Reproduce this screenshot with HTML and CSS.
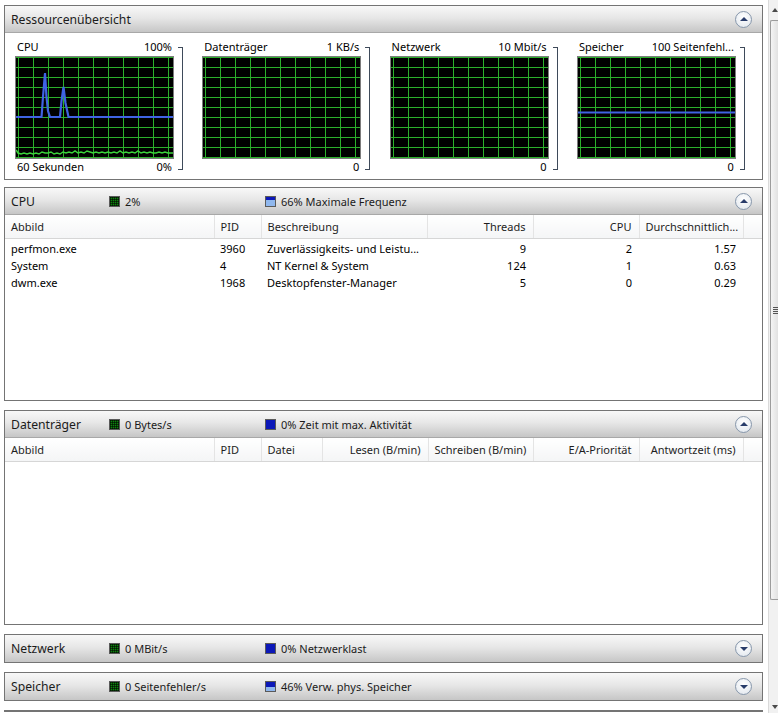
FILE: index.html
```html
<!DOCTYPE html>
<html lang="de">
<head>
  <meta charset="utf-8">
  <title>Ressourcenmonitor</title>
  <link rel="stylesheet" href="styles.css">
</head>
<body>
<div class="window">
<div class="content">

<!-- Übersicht mit den vier Verlaufsgrafiken -->
<section class="panel overview">
  <div class="panel-head">
    <span class="panel-title">Ressourcenübersicht</span>
    <span class="toggle"></span>
  </div>
  <div class="graphs">
    <div class="graph-col">
      <div class="graph-box">
        <div class="graph-label"><span>CPU</span><span>100%</span></div>
        <div class="graph">
          <svg viewBox="0 0 157 101">
            <polyline class="line-green" points="0,93 2,96 5,97 8,96 11,97 14,96 17,97 20,96 23,97 26,95 29,96 32,96 35,95 38,97 41,96 44,97 47,95 50,96 53,95 56,96 59,94 62,96 65,95 68,96 71,94 74,95 77,96 80,95 83,96 86,95 89,96 92,95 95,96 98,95 101,96 104,94 107,96 110,95 113,96 116,95 119,96 122,94 125,96 128,95 131,96 134,95 137,96 140,96 143,95 146,96 149,95 152,96 155,96 157,96"/>
            <polyline class="line-blue" points="0,60 25.5,60 27,40 29,16 30.5,40 32,54 34,60 44,60 45.5,44 47.5,30 49.5,46 52.5,60 157,60"/>
          </svg>
        </div>
        <div class="graph-label"><span>60 Sekunden</span><span>0%</span></div>
      </div>
      <span class="bracket"></span>
    </div>
    <div class="graph-col">
      <div class="graph-box">
        <div class="graph-label"><span>Datenträger</span><span>1 KB/s</span></div>
        <div class="graph"></div>
        <div class="graph-label"><span></span><span>0</span></div>
      </div>
      <span class="bracket"></span>
    </div>
    <div class="graph-col">
      <div class="graph-box">
        <div class="graph-label"><span>Netzwerk</span><span>10 Mbit/s</span></div>
        <div class="graph"></div>
        <div class="graph-label"><span></span><span>0</span></div>
      </div>
      <span class="bracket"></span>
    </div>
    <div class="graph-col">
      <div class="graph-box">
        <div class="graph-label"><span>Speicher</span><span>100 Seitenfehl...</span></div>
        <div class="graph">
          <svg viewBox="0 0 157 101">
            <polyline class="line-blue" points="0,55.5 157,55.5"/>
          </svg>
        </div>
        <div class="graph-label"><span></span><span>0</span></div>
      </div>
      <span class="bracket"></span>
    </div>
  </div>
</section>

<!-- CPU -->
<section class="panel open cpu">
  <div class="panel-head">
    <span class="panel-title">CPU</span>
    <span class="stat"><i class="swatch green"></i>2%</span>
    <span class="stat"><i class="swatch blue part66"></i>66% Maximale Frequenz</span>
    <span class="toggle"></span>
  </div>
  <table class="grid">
    <colgroup>
      <col class="c-image"><col class="c-pid"><col class="c-desc"><col class="c-num"><col class="c-num"><col class="c-avg"><col>
    </colgroup>
    <thead>
      <tr><th>Abbild</th><th>PID</th><th>Beschreibung</th><th class="num">Threads</th><th class="num">CPU</th><th class="num">Durchschnittlich...</th><th class="rest"></th></tr>
    </thead>
    <tbody>
      <tr><td>perfmon.exe</td><td>3960</td><td>Zuverlässigkeits- und Leistu...</td><td class="num">9</td><td class="num">2</td><td class="num">1.57</td><td></td></tr>
      <tr><td>System</td><td>4</td><td>NT Kernel &amp; System</td><td class="num">124</td><td class="num">1</td><td class="num">0.63</td><td></td></tr>
      <tr><td>dwm.exe</td><td>1968</td><td>Desktopfenster-Manager</td><td class="num">5</td><td class="num">0</td><td class="num">0.29</td><td></td></tr>
    </tbody>
  </table>
</section>

<!-- Datenträger -->
<section class="panel open disk">
  <div class="panel-head">
    <span class="panel-title">Datenträger</span>
    <span class="stat"><i class="swatch green"></i>0 Bytes/s</span>
    <span class="stat"><i class="swatch blue"></i>0% Zeit mit max. Aktivität</span>
    <span class="toggle"></span>
  </div>
  <table class="grid">
    <colgroup>
      <col class="c-image"><col class="c-pid"><col class="c-file"><col class="c-num"><col class="c-write"><col class="c-num"><col class="c-avg"><col>
    </colgroup>
    <thead>
      <tr><th>Abbild</th><th>PID</th><th>Datei</th><th class="num">Lesen (B/min)</th><th class="num">Schreiben (B/min)</th><th class="num">E/A-Priorität</th><th class="num">Antwortzeit (ms)</th><th class="rest"></th></tr>
    </thead>
    <tbody></tbody>
  </table>
</section>

<!-- eingeklappte Bereiche -->
<section class="panel">
  <div class="panel-head">
    <span class="panel-title">Netzwerk</span>
    <span class="stat"><i class="swatch green"></i>0 MBit/s</span>
    <span class="stat"><i class="swatch blue"></i>0% Netzwerklast</span>
    <span class="toggle down"></span>
  </div>
</section>

<section class="panel">
  <div class="panel-head">
    <span class="panel-title">Speicher</span>
    <span class="stat"><i class="swatch green"></i>0 Seitenfehler/s</span>
    <span class="stat"><i class="swatch blue part46"></i>46% Verw. phys. Speicher</span>
    <span class="toggle down"></span>
  </div>
</section>

<section class="panel"></section>

</div>

<div class="scrollbar">
  <span class="sb-up"></span>
  <div class="sb-thumb"><span class="grip"></span></div>
  <span class="sb-down"></span>
</div>
</div>
</body>
</html>
```

FILE: styles.css
```css
body {
  margin: 0;
  background: #fff;
  color: #000;
  font-family: "Noto Sans", "DejaVu Sans", sans-serif;
  font-size: 11px;
}

.window {
  display: flex;
  height: 713px;
  overflow: hidden;
}

.content {
  width: 768px;
  flex: none;
  padding: 5px 0 0 4px;
  box-sizing: border-box;
}

.panel {
  width: 759px;
  box-sizing: border-box;
  border: 1px solid #747474;
  margin-bottom: 9px;
  background: #fff;
}

.overview {
  height: 175px;
  margin-bottom: 7px;
}

.cpu {
  height: 214px;
}

.disk {
  height: 215px;
}

.panel-head {
  height: 27px;
  box-sizing: border-box;
  display: flex;
  align-items: center;
  background: linear-gradient(#f8f8f8 0%, #e7e7e7 45%, #c6c6c6 100%);
}

.overview .panel-head,
.open .panel-head {
  border-bottom: 1px solid #a8a8a8;
}

.panel-title {
  width: 98px;
  padding-left: 6px;
  font-size: 12.2px;
  color: #1b1b1b;
  white-space: nowrap;
}

.stat {
  width: 156px;
  display: flex;
  align-items: center;
  white-space: nowrap;
  color: #1b1b1b;
}

.swatch {
  width: 9px;
  height: 9px;
  margin-right: 5px;
  border: 1px solid #5a5a5a;
}

.swatch.green {
  background-color: #0e820e;
  background-image:
    linear-gradient(90deg, rgba(0, 0, 0, 0.55) 1px, transparent 1px),
    linear-gradient(rgba(0, 0, 0, 0.55) 1px, transparent 1px);
  background-size: 2px 2px;
}

.swatch.blue {
  background: #0c18b8;
}

.swatch.part66 {
  background: linear-gradient(#0c18b8 0 30%, #90b8ee 30%);
}

.swatch.part46 {
  background: linear-gradient(#0c18b8 0 55%, #90b8ee 55%);
}

.toggle {
  margin-left: auto;
  margin-right: 10px;
  width: 15px;
  height: 15px;
  border-radius: 50%;
  border: 1px solid #8797ab;
  background: radial-gradient(circle at 50% 35%, #ffffff, #dfe5ec);
  display: flex;
  align-items: center;
  justify-content: center;
}

.toggle::after {
  content: "";
  border-left: 4px solid transparent;
  border-right: 4px solid transparent;
  border-bottom: 4px solid #283c6a;
}

.toggle.down::after {
  border-bottom: 0;
  border-top: 4px solid #283c6a;
}

/* Verlaufsgrafiken */
.graphs {
  display: grid;
  grid-template-columns: repeat(4, 187.3px);
  padding: 6px 0 0 10px;
}

.graph-col {
  display: flex;
  align-items: flex-start;
}

.graph-box {
  width: 159px;
}

.graph-label {
  display: flex;
  justify-content: space-between;
  height: 16px;
  line-height: 16px;
  padding: 0 2px;
  white-space: nowrap;
}

.graph {
  height: 103px;
  box-sizing: border-box;
  margin-top: 1px;
  border: 1px solid #7c7c7c;
  background-color: #000;
  background-image:
    linear-gradient(90deg, #2bb02b 1px, transparent 1px),
    linear-gradient(#2bb02b 1px, transparent 1px);
  background-size: 15px 10px;
  background-position: 2px 0;
}

.graph svg {
  display: block;
  width: 157px;
  height: 101px;
}

.line-blue {
  fill: none;
  stroke: #3f63e4;
  stroke-width: 2.2;
}

.line-green {
  fill: none;
  stroke: #3bd33b;
  stroke-width: 1.5;
}

.bracket {
  width: 4px;
  height: 121px;
  margin: 8px 0 0 4px;
  border: 1px solid #3e4a5a;
  border-left: 0;
}

/* Prozesstabellen */
.grid {
  width: 757px;
  table-layout: fixed;
  border-collapse: collapse;
}

.c-image { width: 209px; }
.c-pid { width: 47px; }
.c-desc { width: 166px; }
.c-file { width: 61px; }
.c-num { width: 106px; }
.c-write { width: 105px; }
.c-avg { width: 104px; }

.grid th {
  height: 23px;
  padding: 0 6px;
  border-bottom: 1px solid #d6d6d6;
  border-right: 1px solid #e4e4e4;
  background: linear-gradient(#ffffff, #f4f5f6);
  font-weight: normal;
  text-align: left;
  color: #1e1e1e;
  white-space: nowrap;
  overflow: hidden;
}

.grid th.rest {
  border-right: 0;
}

.grid td {
  height: 17px;
  padding: 0 6px;
  white-space: nowrap;
  overflow: hidden;
}

.grid tbody tr:first-child td {
  padding-top: 1px;
}

.grid .num {
  text-align: right;
  padding-right: 7px;
}

/* Bildlaufleiste */
.scrollbar {
  width: 10px;
  flex: none;
  box-sizing: border-box;
  border-left: 1px solid #dadada;
  background: #f1f1f1;
  display: flex;
  flex-direction: column;
}

.sb-up,
.sb-down {
  display: block;
  height: 20px;
  position: relative;
}

.sb-up::after,
.sb-down::after {
  content: "";
  position: absolute;
  left: 3px;
  border-left: 3px solid transparent;
  border-right: 3px solid transparent;
}

.sb-up::after {
  top: 8px;
  border-bottom: 4px solid #4a4a4a;
}

.sb-down {
  margin-top: auto;
  height: 12px;
}

.sb-down::after {
  top: 4px;
  border-top: 4px solid #4a4a4a;
}

.sb-thumb {
  height: 580px;
  margin-left: 1px;
  box-sizing: border-box;
  border: 1px solid #9c9c9c;
  border-right: 0;
  border-radius: 2px 0 0 2px;
  background: linear-gradient(90deg, #f4f4f4, #e1e1e1);
  display: flex;
  align-items: center;
}

.grip {
  width: 6px;
  height: 7px;
  margin-left: 2px;
  background: repeating-linear-gradient(#555 0 1px, transparent 1px 2px);
}
```
